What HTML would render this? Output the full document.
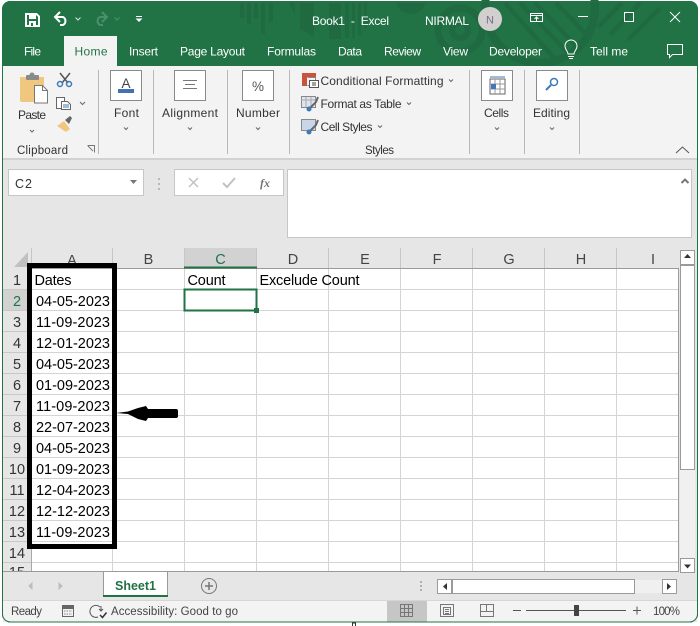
<!DOCTYPE html>
<html><head><meta charset="utf-8"><style>
html,body{margin:0;padding:0;background:#fff;width:700px;height:626px;overflow:hidden}
svg{display:block;font-family:"Liberation Sans",sans-serif}
.t{fill:#fff;font-size:12px}
.r{fill:#333;font-size:12px}
.c{fill:#000;font-size:14.5px}
.h{fill:#444;font-size:14.5px;text-anchor:middle}
.rn{fill:#333;font-size:14.5px;text-anchor:middle}
.chev{fill:none;stroke:#666;stroke-width:1}
</style></head><body>
<svg width="700" height="626" viewBox="0 0 700 626" xmlns="http://www.w3.org/2000/svg">
<rect width="700" height="626" fill="#fff"/>
<!-- window -->
<rect x="2" y="1" width="696" height="621.5" rx="8" fill="#217346"/>
<!-- title pattern -->
<g fill="#1f6a41">
<rect x="240" y="3" width="4" height="15"/><rect x="247" y="3" width="4" height="21"/><rect x="254" y="3" width="4" height="15"/><rect x="261" y="3" width="4" height="31"/><rect x="269" y="3" width="4" height="19"/>
<path d="M289 3h6v12z"/><path d="M300 3h14v34l-14-8z"/><rect x="329" y="3" width="12" height="36"/><rect x="345" y="3" width="4" height="35"/><rect x="352" y="3" width="3" height="35"/><rect x="358" y="3" width="3" height="32"/><rect x="364" y="3" width="3" height="25"/>
<path d="M397 3h28a14 11 0 0 1-28 0z"/>
</g>
<g fill="none" stroke="#1f6a41">
<circle cx="460" cy="30" r="22" stroke-width="7"/><circle cx="460" cy="30" r="8" stroke-width="6"/>
<circle cx="540" cy="8" r="55" stroke-width="8"/>
<path d="M505 3l50 56M520 3l50 52M535 3l44 46M556 3l35 36M622 3l-24 24M640 3l-30 32M660 8l-32 32" stroke-width="4.500"/>
</g>
<rect x="2" y="36" width="0" height="0"/>
<!-- QAT -->
<path d="M26 14h10.500l2.500 2.500V26H26z" fill="none" stroke="#fff" stroke-width="2"/>
<rect x="29" y="14" width="7" height="5" fill="#fff"/>
<rect x="29" y="21" width="7" height="5" fill="#fff"/><rect x="31" y="23" width="2" height="3" fill="#217346"/>
<g fill="none" stroke="#fff" stroke-width="2">
<path d="M56 17h7a4.500 4.500 0 0 1 0 8h-3"/><path d="M60 12l-5 5 5 5"/>
</g>
<path d="M75.500 17.500l2.500 2.500 2.500-2.500" fill="none" stroke="#d5e5dc"/>
<g fill="none" stroke="#4d8f6b" stroke-width="2"><path d="M106 17H100a4.500 4.500 0 0 0 0 8h3"/><path d="M102 12l5 5-5 5"/></g>
<path d="M114.500 17.500l2.500 2.500 2.500-2.500" fill="none" stroke="#4d8f6b"/>
<path d="M136 16.500h6" stroke="#fff"/><path d="M135.500 18.500h7l-3.500 3.500z" fill="#fff"/>
<text class="t" x="312" y="25" textLength="77" xml:space="preserve">Book1  -  Excel</text>
<text class="t" x="425" y="25" textLength="44">NIRMAL</text>
<circle cx="490" cy="19" r="12" fill="#d2d0ce"/><text x="490" y="23.500" text-anchor="middle" style="font-size:11px" fill="#7a6a8a">N</text>
<!-- window controls -->
<g fill="none" stroke="#fff">
<rect x="530.500" y="13.500" width="12" height="8"/><path d="M530 15.500h13"/><path d="M536.500 21v-4M534.500 19l2-2 2 2"/>
<path d="M578 16.500h10"/>
<rect x="624.500" y="12.500" width="9" height="9"/>
<path d="M670 12l10 10M680 12l-10 10"/>
</g>
<!-- tabs -->
<rect x="64" y="36" width="53" height="31" fill="#f3f3f3"/>
<text class="t" x="24" y="55.500" textLength="17">File</text>
<text x="74.500" y="55.500" textLength="33" style="font-size:12px" fill="#217346">Home</text>
<text class="t" x="129" y="55.500" textLength="29">Insert</text>
<text class="t" x="180" y="55.500" textLength="65">Page Layout</text>
<text class="t" x="267" y="55.500" textLength="49">Formulas</text>
<text class="t" x="338" y="55.500" textLength="24">Data</text>
<text class="t" x="384" y="55.500" textLength="37">Review</text>
<text class="t" x="443" y="55.500" textLength="25">View</text>
<text class="t" x="489" y="55.500" textLength="53">Developer</text>
<g fill="none" stroke="#fff"><path d="M568 54c0-3-3-4-3-8a6 6 0 0 1 12 0c0 4-3 5-3 8z"/><path d="M568 56.500h6M569 58.500h4"/></g>
<text class="t" x="590" y="55.500" textLength="38">Tell me</text>
<path d="M667.500 44.500h15v10h-10l-3 3v-3h-2z" fill="none" stroke="#fff"/>
<!-- ribbon -->
<rect x="3" y="66" width="694" height="92" fill="#f3f3f3"/>
<rect x="3" y="158" width="694" height="2" fill="#d2d2d2"/>
<rect x="3" y="160" width="694" height="412" fill="#e6e6e6"/>
<g stroke="#b8b8b8"><path d="M98.500 70v84M153.500 70v84M227.500 70v84M289.500 70v84M469.500 70v84M524.500 70v84M579.500 70v84"/></g>
<!-- paste -->
<path d="M20 77h24v25H22a2 2 0 0 1-2-2z" fill="#efc77e"/><rect x="26" y="75" width="13" height="5" rx="1" fill="#8a8a8a"/><circle cx="32" cy="75" r="2.500" fill="#8a8a8a"/>
<path d="M34.500 85.500h8l5 5v12.500h-13z" fill="#fff" stroke="#777"/><path d="M42.500 85.500v5h5" fill="none" stroke="#777"/>
<text x="18" y="119" textLength="28" style="font-size:12px" fill="#333">Paste</text>
<path class="chev" d="M30 130l2 2 2-2"/>
<!-- cut -->
<g fill="none"><path d="M60 73l8 10M70 73l-8 10" stroke="#555" stroke-width="1.500"/><circle cx="60" cy="84" r="2.500" stroke="#3d7ab8" stroke-width="1.500"/><circle cx="69" cy="84" r="2.500" stroke="#3d7ab8" stroke-width="1.500"/></g>
<!-- copy -->
<path d="M56.500 97.500h8v11h-8z" fill="#fff" stroke="#666"/><path d="M61.500 101.500h6l3 3v5h-9z" fill="#fff" stroke="#666"/><path d="M63 105h6M63 107h6" stroke="#3d7ab8"/>
<path class="chev" d="M80 102l2.500 2.500 2.500-2.500"/>
<!-- painter -->
<path d="M57 126l7-5 6 8-4 3z" fill="#efc77e"/><path d="M65 120l5-4 2 2-3 6z" fill="#666"/>
<text x="17" y="154" textLength="51" style="font-size:11.500px" fill="#333">Clipboard</text>
<path d="M87.500 145.500h7v7M88 146l5 5" fill="none" stroke="#777"/>
<!-- group boxes -->
<g fill="#fff" stroke="#8a8a8a">
<rect x="110.500" y="70.500" width="31" height="30"/><rect x="174.500" y="70.500" width="31" height="30"/><rect x="242.500" y="70.500" width="31" height="30"/><rect x="481.500" y="70.500" width="31" height="30"/><rect x="536.500" y="70.500" width="31" height="30"/>
</g>
<text x="126" y="88" text-anchor="middle" style="font-size:13.500px" fill="#444">A</text><rect x="118" y="89" width="16" height="4" fill="#4472b0"/>
<path d="M183 80.500h14M185 84.500h10M183 88.500h14" stroke="#777" fill="none"/>
<text x="258" y="91" text-anchor="middle" style="font-size:13.500px" fill="#555">%</text>
<path d="M490 79h15v15h-15z" fill="#fff" stroke="#666"/><path d="M490 84h15M490 89h15M495 79v15M500 79v15" stroke="#999"/><rect x="491" y="84" width="5" height="5" fill="#3f78bc"/><path d="M490 77h15" stroke="#3f78bc"/>
<circle cx="554" cy="82" r="3.500" fill="none" stroke="#3f78bc" stroke-width="1.500"/><path d="M551 85l-5 5" stroke="#3f78bc" stroke-width="2"/>
<text x="114" y="117" textLength="25" style="font-size:12px" fill="#333">Font</text><path class="chev" d="M124 127.500l2 2 2-2"/>
<text x="162" y="117" textLength="56" style="font-size:12px" fill="#333">Alignment</text><path class="chev" d="M188 127.500l2 2 2-2"/>
<text x="236" y="117" textLength="44" style="font-size:12px" fill="#333">Number</text><path class="chev" d="M256 127.500l2 2 2-2"/>
<text x="484" y="117" textLength="25" style="font-size:12px" fill="#333">Cells</text><path class="chev" d="M495 127.500l2 2 2-2"/>
<text x="533" y="117" textLength="37" style="font-size:12px" fill="#333">Editing</text><path class="chev" d="M550 127.500l2 2 2-2"/>
<!-- styles -->
<rect x="302" y="73" width="14" height="4" fill="#c8553a"/><rect x="302" y="77" width="5" height="9" fill="#c8553a"/><path d="M307.500 77.500h8v8h-8" fill="none" stroke="#888"/><rect x="309.500" y="80.500" width="9" height="7" fill="#fff" stroke="#555"/><path d="M312 83h4M312 85h4" stroke="#444"/>
<g id="st"><rect x="301.500" y="96.500" width="14" height="11" fill="#dce4ee" stroke="#888"/><path d="M301 100h15M306 97v10M311 97v10" stroke="#aaa"/><path d="M310 108l6-6 2-5" fill="none" stroke="#666" stroke-width="2"/><circle cx="309" cy="109" r="2.500" fill="#3f78bc"/></g>
<rect x="301.500" y="119.500" width="14" height="11" fill="#c8d6e8" stroke="#888"/><path d="M310 131l6-6 2-5" fill="none" stroke="#666" stroke-width="2"/><circle cx="309" cy="132" r="2.500" fill="#3f78bc"/>
<text x="320.500" y="85" textLength="123" style="font-size:12px" fill="#333">Conditional Formatting</text><path class="chev" d="M449 79.500l2 2 2-2"/>
<text x="320.500" y="108" textLength="81" style="font-size:12px" fill="#333">Format as Table</text><path class="chev" d="M407 102.500l2 2 2-2"/>
<text x="320.500" y="131" textLength="52" style="font-size:12px" fill="#333">Cell Styles</text><path class="chev" d="M378 125.500l2 2 2-2"/>
<text x="365" y="154" textLength="29" style="font-size:11.500px" fill="#333">Styles</text>
<path d="M676 153l6.500-6 6.500 6" fill="none" stroke="#555"/>
<!-- formula bar -->
<rect x="8.500" y="169.500" width="135" height="26" fill="#fff" stroke="#c6c6c6"/>
<text x="15" y="188" textLength="17" style="font-size:12.5px" fill="#333">C2</text>
<path d="M130 180h7l-3.500 4z" fill="#777"/>
<path d="M159 178v2M159 183v2M159 188v2" stroke="#aaa" stroke-width="1.500"/>
<rect x="174.500" y="169.500" width="109" height="26" fill="#fff" stroke="#c6c6c6"/>
<path d="M189 178l9 9M198 178l-9 9" stroke="#c2c2c2" stroke-width="1.500"/>
<path d="M223 183l4 4 8-9" fill="none" stroke="#c2c2c2" stroke-width="2"/>
<text x="260" y="187" style="font-size:12px;font-style:italic;font-family:'Liberation Serif',serif;font-weight:bold" fill="#777">fx</text>
<rect x="287.500" y="169.500" width="404" height="68" fill="#fff" stroke="#c6c6c6"/>
<path d="M681.500 183l3.500-3.500 3.500 3.500" fill="none" stroke="#777" stroke-width="2"/>
<!-- sheet -->
<rect x="3" y="268" width="676" height="304" fill="#fff"/>
<rect x="3" y="248" width="676" height="20" fill="#e6e6e6"/>
<rect x="3" y="268" width="29" height="304" fill="#e6e6e6"/>
<rect x="185" y="248" width="72" height="20" fill="#d2d2d2"/>
<rect x="3" y="290" width="29" height="21" fill="#d2d2d2"/>
<path d="M28 252v15H14z" fill="#c0c0c0"/>
<!-- grid -->
<g stroke="#d4d4d4">
<path d="M32 289.500h646M32 310.500h646M32 331.500h646M32 352.500h646M32 373.500h646M32 394.500h646M32 415.500h646M32 436.500h646M32 457.500h646M32 478.500h646M32 499.500h646M32 520.500h646M32 541.500h646M32 562.500h646"/>
<path d="M112.500 268v304M184.500 268v304M256.500 268v304M328.500 268v304M400.500 268v304M472.500 268v304M544.500 268v304M616.500 268v304"/>
<path d="M3 289.500h29M3 310.500h29M3 331.500h29M3 352.500h29M3 373.500h29M3 394.500h29M3 415.500h29M3 436.500h29M3 457.500h29M3 478.500h29M3 499.500h29M3 520.500h29M3 541.500h29M3 562.500h29" stroke="#c8c8c8"/>
</g>
<g stroke="#c6c6c6"><path d="M31.500 248v20M112.500 248v20M184.500 248v20M256.500 248v20M328.500 248v20M400.500 248v20M472.500 248v20M544.500 248v20M616.500 248v20"/></g>
<path d="M31.500 268v304" stroke="#a8a8a8"/>
<path d="M32 268.500h647M678.500 268v304M3 571.500h676" stroke="#9a9a9a" fill="none"/>
<rect x="184" y="266.500" width="73" height="2" fill="#217346"/>
<!-- headers -->
<text class="h" x="72" y="265">A</text><text class="h" x="148.500" y="264">B</text><text class="h" x="220.500" y="264" style="fill:#217346">C</text><text class="h" x="293" y="264">D</text><text class="h" x="365" y="264">E</text><text class="h" x="437" y="264">F</text><text class="h" x="509" y="264">G</text><text class="h" x="581" y="264">H</text><text class="h" x="653" y="264">I</text>
<!-- row nums -->
<text class="rn" x="17" y="285">1</text><text class="rn" x="17" y="306" style="fill:#217346">2</text><text class="rn" x="17" y="327">3</text><text class="rn" x="17" y="348">4</text><text class="rn" x="17" y="369">5</text><text class="rn" x="17" y="390">6</text><text class="rn" x="17" y="411">7</text><text class="rn" x="17" y="432">8</text><text class="rn" x="17" y="453">9</text><text class="rn" x="17" y="474">10</text><text class="rn" x="17" y="495">11</text><text class="rn" x="17" y="516">12</text><text class="rn" x="17" y="537">13</text><text class="rn" x="17" y="558">14</text>
<clipPath id="cl"><rect x="3" y="563" width="29" height="8"/></clipPath>
<text class="rn" x="17" y="577" clip-path="url(#cl)">15</text>
<rect x="3" y="572" width="694" height="50" fill="#e6e6e6"/>
<!-- cells -->
<text class="c" x="34.500" y="285" textLength="37">Dates</text>
<text class="c" x="187.500" y="285" textLength="38">Count</text>
<text class="c" x="259.500" y="285" textLength="100">Excelude Count</text>
<text class="c" x="36" y="306" textLength="74">04-05-2023</text>
<text class="c" x="36" y="327" textLength="74">11-09-2023</text>
<text class="c" x="36" y="348" textLength="74">12-01-2023</text>
<text class="c" x="36" y="369" textLength="74">04-05-2023</text>
<text class="c" x="36" y="390" textLength="74">01-09-2023</text>
<text class="c" x="36" y="411" textLength="74">11-09-2023</text>
<text class="c" x="36" y="432" textLength="74">22-07-2023</text>
<text class="c" x="36" y="453" textLength="74">04-05-2023</text>
<text class="c" x="36" y="474" textLength="74">01-09-2023</text>
<text class="c" x="36" y="495" textLength="74">12-04-2023</text>
<text class="c" x="36" y="516" textLength="74">12-12-2023</text>
<text class="c" x="36" y="537" textLength="74">11-09-2023</text>
<!-- selection -->
<rect x="184.500" y="289.500" width="72" height="21" fill="none" stroke="#217346" stroke-width="2"/>
<rect x="254" y="308" width="5" height="5" fill="#217346"/>
<!-- black box -->
<rect x="29.500" y="265.500" width="85" height="281" fill="none" stroke="#000" stroke-width="5"/>
<!-- arrow -->
<path d="M116 413l12-1.500 10-3.500 8-2 2 3h28a2 2 0 0 1 2 2v5a2 2 0 0 1-2 2h-28l-2 3-8-2-10-5z" fill="#000"/>
<!-- vertical scroll -->
<rect x="679" y="248" width="18" height="324" fill="#e6e6e6"/>
<rect x="680.500" y="250.500" width="14" height="14" fill="#fff" stroke="#9a9a9a"/>
<path d="M684 258h7l-3.500-4z" fill="#333"/>
<rect x="680.500" y="265.500" width="14" height="204" fill="#fff" stroke="#9a9a9a"/>
<rect x="680" y="470" width="15" height="88" fill="#f0f0f0"/>
<rect x="680.500" y="558.500" width="14" height="14" fill="#fff" stroke="#9a9a9a"/>
<path d="M684 564.500h7l-3.500 4z" fill="#333"/>
<!-- sheet tabs -->
<path d="M32 583l-3 3 3 3z" fill="#bdbdbd" stroke="#bdbdbd"/><path d="M59 583l3 3-3 3z" fill="#bdbdbd" stroke="#bdbdbd"/>
<path d="M103.500 572v24h64v-24" fill="#fff" stroke="#9a9a9a"/>
<rect x="103" y="595" width="65" height="2" fill="#217346"/>
<text x="115" y="590" textLength="41" style="font-size:12.5px;font-weight:bold" fill="#217346">Sheet1</text>
<circle cx="209" cy="586" r="7.500" fill="none" stroke="#777"/><path d="M205 586h8M209 582v8" stroke="#777" stroke-width="1.500"/>
<path d="M421 581v2M421 585v2M421 589v2" stroke="#b0b0b0" stroke-width="2"/>
<rect x="437.500" y="579.500" width="14" height="14" fill="#fff" stroke="#9a9a9a"/><path d="M447 583v7l-4-3.500z" fill="#333"/>
<rect x="452.500" y="579.500" width="182" height="14" fill="#fff" stroke="#9a9a9a"/>
<rect x="635" y="580" width="27" height="13" fill="#f0f0f0"/>
<rect x="662.500" y="579.500" width="14" height="14" fill="#fff" stroke="#9a9a9a"/><path d="M667 583v7l4-3.500z" fill="#333"/>
<!-- status -->
<rect x="3" y="600" width="694" height="22" fill="#f3f3f3" rx="6"/>
<rect x="3" y="600" width="694" height="8" fill="#f3f3f3"/>
<path d="M3 600.500h694" stroke="#d6d6d6"/>
<text x="11" y="615" textLength="31" style="font-size:11.500px" fill="#444">Ready</text>
<rect x="62" y="605" width="12" height="3" fill="#666"/><rect x="62.500" y="608.500" width="11" height="8" fill="none" stroke="#666"/><path d="M64 611h8M64 614h8" stroke="#888" stroke-dasharray="1.500 1"/>
<g fill="none" stroke="#555"><path d="M100 607a6 6 0 1 0-2 10"/><path d="M101 606v5M99 609l2 2 2-2"/></g><path d="M100 615l2.500 2.500 4-5" fill="none" stroke="#333" stroke-width="1.500"/>
<text x="111" y="615" textLength="127" style="font-size:11.500px" fill="#444">Accessibility: Good to go</text>
<rect x="387" y="601" width="40" height="21" fill="#c6c6c6"/>
<g fill="none" stroke="#777"><rect x="400.500" y="604.500" width="12" height="12"/><path d="M404.500 604v13M408.500 604v13M400 608.500h13M400 612.500h13"/>
<rect x="440.500" y="604.500" width="13" height="12"/><rect x="443.500" y="607.500" width="7" height="7"/><path d="M445 609.500h4M445 611.500h4M445 613.500h4"/>
<rect x="480.500" y="604.500" width="13" height="12"/><path d="M480 611.500h6.500v-7M486.500 611.500h7"/></g>
<path d="M513 610.500h8M526 610.500h100M633 610.500h8M637 606.500v8" stroke="#555" fill="none"/>
<rect x="574" y="605" width="5" height="11" fill="#444"/>
<text x="653" y="615" textLength="27" style="font-size:11.500px" fill="#444">100%</text>
<!-- window frame -->
<rect x="2.500" y="1.500" width="695" height="620.500" rx="8" fill="none" stroke="#217346"/>
<path d="M352.500 626v-3h3v3" fill="none" stroke="#333"/>
</svg>
</body></html>
